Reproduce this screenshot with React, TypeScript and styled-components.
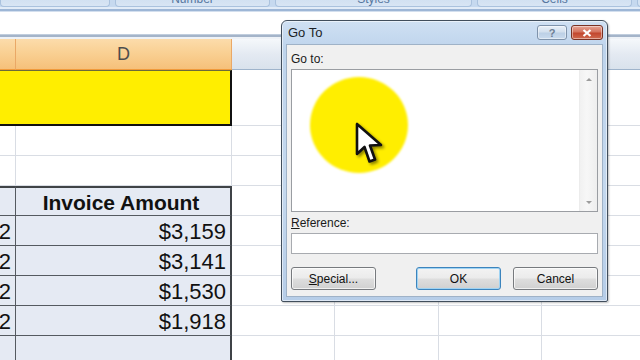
import styled, { createGlobalStyle } from "styled-components";

const colors = {
  ribbon: "#c6d9ef",
  ribbonBox: "#d8e5f4",
  ribbonText: "#56779f",
  grid: "#d9dde4",
  tableBorder: "#555a60",
  tableBg: "#e5eaf3",
  yellow: "#ffee00",
  dialogBody: "#f0f0f0",
  frame: "#bed4ec",
};

const GlobalStyle = createGlobalStyle`
  * { box-sizing: border-box; }
  html, body { margin: 0; padding: 0; background: #fff; }
`;

const Screen = styled.div`
  position: relative;
  width: 640px;
  height: 360px;
  overflow: hidden;
  background: #fff;
  font-family: "Liberation Sans", Arial, sans-serif;
`;

/* ---------- ribbon remains ---------- */

const RibbonStrip = styled.div`
  display: flex;
  gap: 5px;
  height: 7px;
  background: ${colors.ribbon};
`;

const GroupLabel = styled.div<{ $w: number }>`
  flex: none;
  width: ${(p) => p.$w}px;
  height: 7px;
  overflow: hidden;
  background: linear-gradient(#d2e1f2, ${colors.ribbonBox});
  border: 1px solid #aac2de;
  border-top: none;
  border-radius: 0 0 4px 4px;
  text-align: center;

  span {
    display: block;
    margin-top: -7px;
    font-size: 12px;
    line-height: 12px;
    color: ${colors.ribbonText};
  }
`;

const RibbonEdge = styled.div`
  height: 5px;
  background: linear-gradient(#e2ecf8 0 35%, #9db6d6 35% 75%, #d3dfee 75%);
`;

const FormulaArea = styled.div`
  height: 22px;
  background: #fff;
`;

const SheetEdge = styled.div`
  height: 5px;
  background: linear-gradient(#c0cddd 0 20%, #a4b4c9 20% 60%, #eef2f7 60%);
`;

/* ---------- sheet ---------- */

const Sheet = styled.div`
  display: grid;
  grid-template-columns: 16px 216px 103px 104px 103px 104px;
  grid-template-rows: 31px 56px repeat(9, 30px);
`;

const ColHead = styled.div<{ $active?: boolean }>`
  display: flex;
  align-items: center;
  justify-content: center;
  font-size: 18px;
  color: #4d4d4d;
  background: ${(p) =>
    p.$active
      ? "linear-gradient(#fcdcab, #f9cf91 50%, #f6c07a)"
      : "linear-gradient(#f5f8fb, #e4eaf2 50%, #d9e2ec)"};
  border-right: 1px solid ${(p) => (p.$active ? "#eaa866" : "#c3cfdc")};
  border-bottom: 1px solid ${(p) => (p.$active ? "#f09a3c" : "#9fb4cb")};
`;

const GridCell = styled.div`
  border-right: 1px solid ${colors.grid};
  border-bottom: 1px solid ${colors.grid};
`;

const YellowCell = styled.div`
  grid-column: span 2;
  background: ${colors.yellow};
  border-top: 1px solid #6b6b3a;
  border-right: 2px solid #111;
  border-bottom: 2px solid #111;
`;

const TableCell = styled.div<{ $top?: boolean; $last?: boolean; $head?: boolean }>`
  display: flex;
  align-items: center;
  justify-content: ${(p) => (p.$head ? "center" : "flex-end")};
  padding: 2px 4px 0 0;
  overflow: hidden;
  white-space: nowrap;
  background: ${colors.tableBg};
  border-top: ${(p) => (p.$top ? `2px solid #3f4347` : "none")};
  border-right: ${(p) => (p.$last ? "2px solid #3f4347" : `1px solid ${colors.tableBorder}`)};
  border-bottom: 1px solid ${colors.tableBorder};
  font-size: ${(p) => (p.$head ? "21px" : "22px")};
  font-weight: ${(p) => (p.$head ? 700 : 400)};
  color: #111;
`;

/* ---------- dialog ---------- */

const Dialog = styled.div`
  position: absolute;
  left: 281px;
  top: 20px;
  width: 327px;
  height: 282px;
  display: flex;
  flex-direction: column;
  padding: 0 4px 4px;
  border: 1px solid #414e5c;
  border-radius: 6px 6px 2px 2px;
  background: linear-gradient(#cfe0f3, ${colors.frame} 10%, #c4d8ee 60%, #b6cde8);
  box-shadow: inset 0 0 0 1px rgba(255, 255, 255, 0.55), 1px 1px 2px rgba(0, 0, 0, 0.25);
`;

const TitleBar = styled.div`
  display: flex;
  align-items: center;
  gap: 4px;
  height: 23px;
  padding-left: 2px;
`;

const TitleText = styled.div`
  flex: 1;
  font-size: 13px;
  color: #1b1f26;
`;

const CaptionButton = styled.div<{ $close?: boolean }>`
  display: flex;
  align-items: center;
  justify-content: center;
  width: ${(p) => (p.$close ? 32 : 30)}px;
  height: 15px;
  border-radius: 3px;
  border: 1px solid ${(p) => (p.$close ? "#7a3224" : "#7f93ab")};
  background: ${(p) =>
    p.$close
      ? "linear-gradient(#e6a596, #d4735e 45%, #c2472f 55%, #d06a4f)"
      : "linear-gradient(#e9f0f8, #d3e0ee 45%, #bcd0e6 55%, #cadbee)"};
  box-shadow: inset 0 0 0 1px rgba(255, 255, 255, 0.45);
  font-size: 11px;
  font-weight: 700;
  color: ${(p) => (p.$close ? "#fff" : "#6d7f95")};
`;

const Body = styled.div`
  flex: 1;
  display: flex;
  flex-direction: column;
  padding: 6px 4px 0;
  background: ${colors.dialogBody};
  border: 1px solid #9fb2c7;
  font-size: 12px;
  color: #1a1a1a;
`;

const FieldLabel = styled.div<{ $gap?: number }>`
  line-height: 16px;
  margin-top: ${(p) => p.$gap ?? 0}px;
  margin-bottom: 2px;

  u {
    text-decoration: underline;
    text-underline-offset: 1px;
  }
`;

const ListBox = styled.div`
  display: flex;
  height: 143px;
  background: #fff;
  border: 1px solid #9a9da2;
`;

const ListArea = styled.div`
  flex: 1;
`;

const ScrollTrack = styled.div`
  width: 18px;
  display: flex;
  flex-direction: column;
  justify-content: space-between;
  align-items: center;
  padding: 8px 0 7px;
  background: linear-gradient(90deg, #f1f1f1, #f7f7f7 40%, #eeeeee);
  border-left: 1px solid #ececec;
`;

const Arrow = styled.div<{ $down?: boolean }>`
  width: 0;
  height: 0;
  border-left: 3px solid transparent;
  border-right: 3px solid transparent;
  ${(p) => (p.$down ? "border-top: 3px solid #9c9c9c;" : "border-bottom: 3px solid #9c9c9c;")}
`;

const TextInput = styled.div`
  height: 21px;
  background: #fff;
  border: 1px solid #a8abb0;
`;

const ButtonRow = styled.div`
  display: flex;
  gap: 12px;
  margin-top: 13px;
`;

const Spacer = styled.div`
  flex: 1;
`;

const DialogButton = styled.div<{ $default?: boolean }>`
  width: 85px;
  height: 23px;
  display: flex;
  align-items: center;
  justify-content: center;
  border-radius: 3px;
  border: 1px solid ${(p) => (p.$default ? "#3c84bd" : "#777a7e")};
  background: linear-gradient(#f3f3f3, #ebebeb 48%, #dedede 52%, #d0d0d0);
  box-shadow: inset 0 0 0 1px ${(p) => (p.$default ? "#9fd3f3" : "rgba(255,255,255,0.7)")};
  font-size: 12px;
  color: #111;

  u {
    text-decoration: underline;
    text-underline-offset: 1px;
  }
`;

/* ---------- spotlight and pointer ---------- */

const Spotlight = styled.div`
  position: absolute;
  left: 310px;
  top: 77px;
  width: 98px;
  height: 96px;
  border-radius: 50%;
  background: ${colors.yellow};
  filter: blur(1px);
`;

const Pointer = styled.svg`
  position: absolute;
  left: 355px;
  top: 122px;
  filter: drop-shadow(2px 2px 1.5px rgba(0, 0, 0, 0.45));
`;

const amounts = ["$3,159", "$3,141", "$1,530", "$1,918"];

const OtherCols = () => (
  <>
    <GridCell />
    <GridCell />
    <GridCell />
    <GridCell />
  </>
);

const App = () => {
  return (
    <Screen>
      <GlobalStyle />
      <RibbonStrip>
        <GroupLabel $w={110} />
        <GroupLabel $w={155}>
          <span>Number</span>
        </GroupLabel>
        <GroupLabel $w={197}>
          <span>Styles</span>
        </GroupLabel>
        <GroupLabel $w={155}>
          <span>Cells</span>
        </GroupLabel>
        <GroupLabel $w={60} />
      </RibbonStrip>
      <RibbonEdge />
      <FormulaArea />
      <SheetEdge />

      <Sheet>
        <ColHead $active />
        <ColHead $active>D</ColHead>
        <ColHead />
        <ColHead />
        <ColHead />
        <ColHead />

        <YellowCell />
        <OtherCols />

        <GridCell />
        <GridCell />
        <OtherCols />

        <GridCell />
        <GridCell />
        <OtherCols />

        <TableCell $top />
        <TableCell $top $last $head>
          Invoice Amount
        </TableCell>
        <OtherCols />

        {amounts.map((a) => (
          <>
            <TableCell key={a + "c"}>2</TableCell>
            <TableCell key={a} $last>
              {a}
            </TableCell>
            <OtherCols key={a + "o"} />
          </>
        ))}

        <TableCell />
        <TableCell $last />
        <OtherCols />
      </Sheet>

      <Dialog>
        <TitleBar>
          <TitleText>Go To</TitleText>
          <CaptionButton>?</CaptionButton>
          <CaptionButton $close>
            <svg width="10" height="8" viewBox="0 0 10 8">
              <path d="M1.5 1 L8.5 7 M8.5 1 L1.5 7" stroke="#fff" strokeWidth="2.2" />
            </svg>
          </CaptionButton>
        </TitleBar>
        <Body>
          <FieldLabel>Go to:</FieldLabel>
          <ListBox>
            <ListArea />
            <ScrollTrack>
              <Arrow />
              <Arrow $down />
            </ScrollTrack>
          </ListBox>
          <FieldLabel $gap={3}>
            <u>R</u>eference:
          </FieldLabel>
          <TextInput />
          <ButtonRow>
            <DialogButton>
              <u>S</u>pecial...
            </DialogButton>
            <Spacer />
            <DialogButton $default>OK</DialogButton>
            <DialogButton>Cancel</DialogButton>
          </ButtonRow>
        </Body>
      </Dialog>

      <Spotlight />
      <Pointer width="32" height="46" viewBox="0 0 32 46">
        <path
          d="M2 2 L2 32 L9.5 25 L14.5 39.5 L20 37.5 L15 23.5 L26 23 Z"
          fill="#fff"
          stroke="#111"
          strokeWidth="2.6"
          strokeLinejoin="round"
        />
      </Pointer>
    </Screen>
  );
};

export default App;
